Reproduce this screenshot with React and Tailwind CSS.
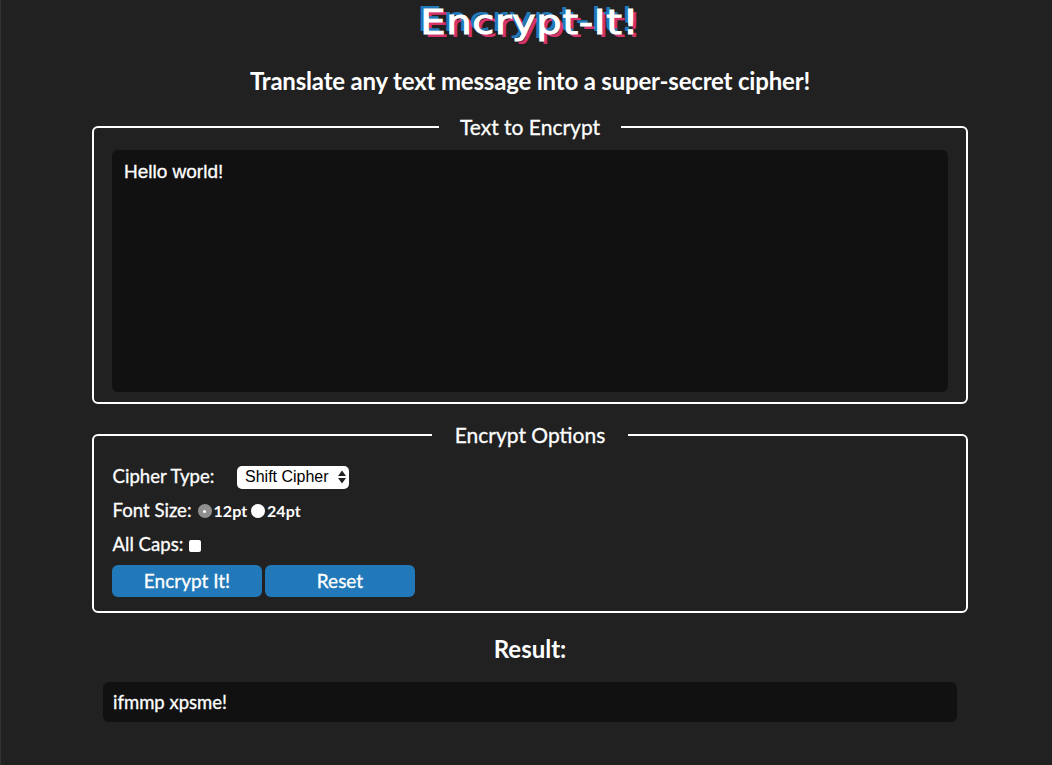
export default function App() {
  const heavy = "[-webkit-text-stroke:0.3px_white]";
  return (
    <div className="h-[765px] overflow-hidden bg-[#212121] border-l border-[#333] text-white font-['Lato',sans-serif]">
      <div className="w-[876px] ml-[91px]">
        <h1 className="h-[46px] flex justify-center text-[34px] leading-[44px] font-normal font-['DejaVu_Sans',sans-serif] [text-shadow:-3px_-3px_0_#2179b9,3px_3px_0_#d6336c]">
          <span className="block scale-x-[1.18] tracking-[0.5px] [-webkit-text-stroke:1px_white]">Encrypt-It!</span>
        </h1>
        <h2 className="mt-[19px] h-[32px] text-center text-[24px] leading-[32px] font-bold tracking-[-0.19px]">
          Translate any text message into a super-secret cipher!
        </h2>
        <fieldset className="mt-[18px] border-2 border-white rounded-[6px] h-[289px] px-[18px]">
          <legend className={`mx-auto px-[21px] text-[21px] leading-[24px] font-normal ${heavy}`}>Text to Encrypt</legend>
          <div className={`mt-[11px] h-[242px] rounded-[6px] bg-[#111] pl-[12px] pt-[10px] text-[19px] leading-[24px] font-['Liberation_Sans',sans-serif] ${heavy}`}>
            Hello world!
          </div>
        </fieldset>
        <fieldset className="mt-[19px] border-2 border-white rounded-[6px] h-[190px] px-[18px]">
          <legend className={`mx-auto px-[23px] text-[21px] leading-[24px] font-normal ${heavy}`}>Encrypt Options</legend>
          <div className="text-[18.6px]">
            <div className="mt-[18px] h-[24px] flex items-center">
              <span className={`w-[125px] pl-[0.5px] ${heavy}`}>Cipher Type:</span>
              <span className="w-[112px] h-[23px] bg-white rounded-[5px] text-black text-[16px] font-normal font-['Liberation_Sans',sans-serif] flex items-center justify-between pl-[8px] pr-[3px]">
                Shift Cipher
                <svg width="8" height="14" viewBox="0 0 8 14"><path d="M4 0.5 8 6H0zM4 13.5 0 8h8z" fill="#222" /></svg>
              </span>
            </div>
            <div className="mt-[10px] h-[24px] flex items-center">
              <span className={`pl-[0.5px] ${heavy}`}>Font Size:</span>
              <span className="ml-[6px] w-[14px] h-[14px] rounded-full bg-[#8f8f8f] flex items-center justify-center"><span className="w-[3px] h-[3px] rounded-full bg-white" /></span>
              <span className="ml-[2px] text-[16px] font-bold">12pt</span>
              <span className="ml-[4px] w-[14px] h-[14px] rounded-full bg-white" />
              <span className="ml-[2px] text-[16px] font-bold">24pt</span>
            </div>
            <div className="mt-[10px] h-[24px] flex items-center">
              <span className={`pl-[0.5px] ${heavy}`}>All Caps:</span>
              <span className="ml-[6px] mt-[2px] w-[12px] h-[12px] rounded-[2px] bg-white" />
            </div>
            <div className="mt-[8px] flex gap-[3px]">
              <button className={`w-[150px] h-[32px] rounded-[6px] bg-[#2179b9] text-[19px] ${heavy}`}>Encrypt It!</button>
              <button className={`w-[150px] h-[32px] rounded-[6px] bg-[#2179b9] text-[19px] ${heavy}`}>Reset</button>
            </div>
          </div>
        </fieldset>
        <h3 className="mt-[20px] h-[32px] text-center text-[24px] leading-[32px] font-bold">Result:</h3>
        <div className={`mt-[17px] ml-[11px] w-[854px] h-[40px] rounded-[6px] bg-[#111] pl-[10px] text-[18.5px] leading-[40px] ${heavy}`}>
          ifmmp xpsme!
        </div>
      </div>
    </div>
  );
}
